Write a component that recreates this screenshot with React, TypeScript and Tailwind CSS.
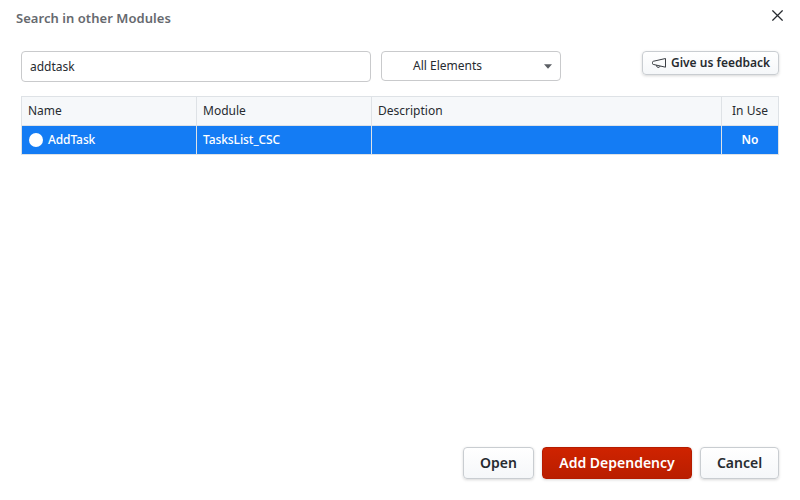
import React from "react";

const secondary =
  "flex items-center justify-center rounded-[4px] border border-[#c9cdd1] bg-gradient-to-b from-white to-[#f5f7f9] text-[#272b30] shadow-[0_1px_3px_rgba(0,0,0,0.16)]";

function CloseIcon() {
  return (
    <svg width="11" height="11" viewBox="0 0 11 11" fill="none" stroke="#272b30" strokeWidth="1.25">
      <path d="M0.4 0.4 10.6 10.6M10.6 0.4 0.4 10.6" />
    </svg>
  );
}

function MegaphoneIcon() {
  return (
    <svg width="15" height="12" viewBox="0 0 15 12" fill="none" stroke="#3a3e43" strokeWidth="1" strokeLinejoin="round">
      <path d="M13.5 1.5V10.2L1.2 7.4Q0.5 7.3 0.5 6.6V5.3Q0.5 4.5 1.2 4.3Z" />
      <path d="M4.3 8.2Q4.5 10.1 6 10.4T8.2 9.1" />
    </svg>
  );
}

export default function App() {
  return (
    <div className="flex h-[500px] w-[800px] flex-col bg-white font-['Noto_Sans',sans-serif] text-[12px] leading-4 text-[#272b30]">
      <header className="flex h-[51px] shrink-0 items-start justify-between pl-4 pr-[17px] pt-[10px]">
        <h1 className="text-[13px] font-semibold leading-4 tracking-[0.05px] text-[#66696e] whitespace-nowrap">Search in other Modules</h1>
        <button aria-label="Close">
          <CloseIcon />
        </button>
      </header>

      <div className="flex h-[45px] shrink-0 items-start pl-[21px] pr-[21px]">
        <input
          className="h-[31px] w-[350px] rounded-[4px] border border-[#c9cacc] bg-white px-2 outline-none"
          defaultValue="addtask"
        />
        <button className="ml-[10px] flex h-[30px] w-[180px] items-center justify-between rounded-[4px] border border-[#c9cacc] pl-[31px] pr-2">
          <span className="whitespace-nowrap">All Elements</span>
          <svg width="8" height="5" viewBox="0 0 8 5" fill="#5b5f64">
            <path d="M0 0.3H8L4 4.7Z" />
          </svg>
        </button>
        <button className={`${secondary} ml-auto h-6 w-[137px] gap-1 pl-px font-semibold`}>
          <MegaphoneIcon />
          <span className="whitespace-nowrap">Give us feedback</span>
        </button>
      </div>

      <table className="ml-[21px] w-[758px] table-fixed border-separate border-spacing-0 border-l border-t border-[#dee2e6] text-left">
        <colgroup>
          <col className="w-[175px]" />
          <col className="w-[175px]" />
          <col className="w-[350px]" />
          <col className="w-[57px]" />
        </colgroup>
        <thead>
          <tr className="h-[29px] bg-[#f6f8fa]">
            <th className="border-b border-r border-[#dee2e6] px-[6px] py-0 font-normal">Name</th>
            <th className="border-b border-r border-[#dee2e6] px-[6px] py-0 font-normal">Module</th>
            <th className="border-b border-r border-[#dee2e6] px-[6px] py-0 font-normal">Description</th>
            <th className="border-b border-r border-[#dee2e6] p-0 text-center font-normal">In Use</th>
          </tr>
        </thead>
        <tbody>
          <tr className="h-[29px] bg-[#147cf4] font-medium text-white">
            <td className="border-b border-r border-[#dee2e6] px-[7px] py-0">
              <div className="flex items-center gap-[5px]">
                <span className="size-[14px] rounded-full bg-white" />
                <span className="tracking-[-0.1px]">AddTask</span>
              </div>
            </td>
            <td className="border-b border-r border-[#dee2e6] px-[6px] py-0 tracking-[-0.08px]">TasksList_CSC</td>
            <td className="border-b border-r border-[#dee2e6] px-[6px] py-0" />
            <td className="border-b border-r border-[#dee2e6] p-0 text-center font-semibold">No</td>
          </tr>
        </tbody>
      </table>

      <footer className="mt-auto flex justify-end gap-2 pb-[21px] pr-[21px] text-[14px] font-semibold">
        <button className={`${secondary} h-8 w-[71px]`}>Open</button>
        <button className="flex h-8 w-[150px] items-center justify-center whitespace-nowrap rounded-[4px] border border-[#b51c00] bg-gradient-to-b from-[#cf2300] to-[#b91e00] text-white shadow-[0_1px_3px_rgba(0,0,0,0.16)]">
          Add Dependency
        </button>
        <button className={`${secondary} h-8 w-[79px]`}>Cancel</button>
      </footer>
    </div>
  );
}
